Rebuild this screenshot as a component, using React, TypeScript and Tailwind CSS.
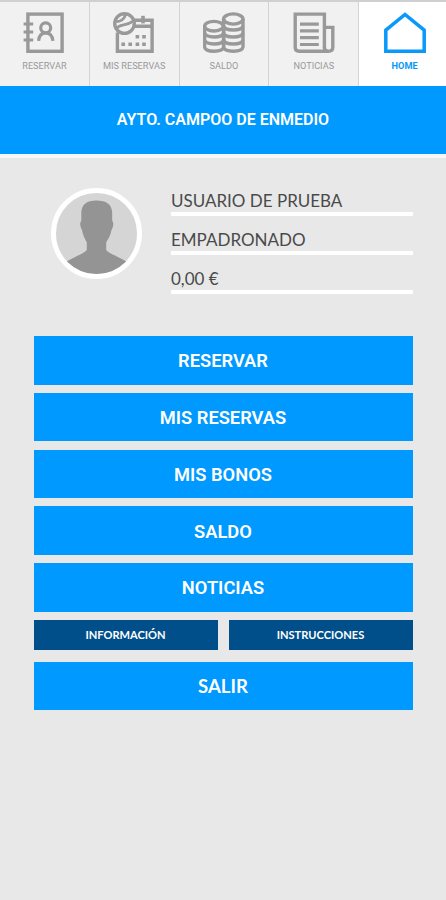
import type { ReactNode } from "react";
import clsx from "clsx";

function AgendaIcon() {
  return (
    <>
      <rect x="4.9" y="2.1" width="34.2" height="37.2" />
      <path d="M0.6 12H10.2M0.6 20H10.2M0.6 28H10.2" strokeWidth="3" />
      <circle cx="22.7" cy="15.8" r="5" strokeWidth="3.2" />
      <path d="M15.6 28.9C16 23.6 18.6 20.8 22.7 20.8S29.4 23.6 29.9 28.9" strokeWidth="3.2" />
    </>
  );
}

function CalendarIcon() {
  return (
    <>
      <circle cx="11.5" cy="11.6" r="9.8" />
      <path d="M2.2 9.6C7.4 10 11.8 7 12.6 2M3 17.8C5.6 11 12.6 14.8 20.6 8.8" strokeWidth="2.8" />
      <path d="M21 8.2H39.1V39.3H4.4V20.5M21.5 14.2H39" />
      <path d="M30 3.8V11.4" strokeWidth="3.6" />
      <path
        d="M22.6 24.8h3.6M29.2 24.8h3.6M8.4 32.2h3.6M15.4 32.2h3.6M22.6 32.2h3.6M29.2 32.2h3.6"
        strokeWidth="3.6"
      />
    </>
  );
}

function CoinsIcon() {
  return (
    <>
      <ellipse cx="30.3" cy="7" rx="9.7" ry="5.1" />
      <ellipse cx="10.9" cy="14.2" rx="9.3" ry="4.8" />
      <path d="M20.6 7V35C21.6 40.6 39 40.6 40 35V7" />
      <path d="M20.6 14C22 19.4 38.6 19.4 40 14M20.6 21C22 26.4 38.6 26.4 40 21M20.6 28C22 33.4 38.6 33.4 40 28" />
      <path d="M1.6 14V35C2.6 40.6 19.6 40.6 20.6 35V14" />
      <path d="M1.6 21C3 26.4 19.2 26.4 20.6 21M1.6 28C3 33.4 19.2 33.4 20.6 28" />
    </>
  );
}

function NewsIcon() {
  return (
    <>
      <path d="M31.4 36V2.1H2.2V35.3Q2.2 39.3 6.2 39.3H35.4Q39.8 39.3 39.8 35.3V15.4H31.4" />
      <path d="M31.4 35.4Q31.4 38 34 39.3" />
      <path d="M7 12.1H25.8M7 18.9H25.8M7 25.7H25.8M7 32.5H25.8" strokeWidth="3.2" />
    </>
  );
}

function HomeIcon() {
  return <path d="M1.8 18.2L21 2.4L40.2 18.2V39.3H1.8Z" strokeWidth="3.5" />;
}

type Tab = { label: string; icon: ReactNode; active?: boolean };

const tabs: Tab[] = [
  { label: "RESERVAR", icon: <AgendaIcon /> },
  { label: "MIS RESERVAS", icon: <CalendarIcon /> },
  { label: "SALDO", icon: <CoinsIcon /> },
  { label: "NOTICIAS", icon: <NewsIcon /> },
  { label: "HOME", icon: <HomeIcon />, active: true },
];

const userInfo = ["USUARIO DE PRUEBA", "EMPADRONADO", "0,00 €"];
const actions = ["RESERVAR", "MIS RESERVAS", "MIS BONOS", "SALDO", "NOTICIAS"];

function TabBar() {
  return (
    <nav className="overflow-hidden border-t-2 border-[#d0d0d0]">
      <div className="grid h-[84px] w-[449px] grid-cols-5">
        {tabs.map(({ label, icon, active }) => (
          <button
            key={label}
            className={clsx(
              "flex flex-col items-center pt-2.5",
              active
                ? "bg-white pl-px font-bold text-[#0a98fa]"
                : "border-r border-[#d4d4d4] bg-[#f2f1f2] text-[#999999]"
            )}
          >
            <svg
              viewBox="0 0 42 42"
              className="size-[42px] shrink-0"
              fill="none"
              stroke="currentColor"
              strokeWidth="3.4"
            >
              {icon}
            </svg>
            <span className="mt-[7px] text-[9.2px] leading-[10px] whitespace-nowrap">{label}</span>
          </button>
        ))}
      </div>
    </nav>
  );
}

function Avatar() {
  return (
    <div className="size-[91px] shrink-0 overflow-hidden rounded-full border-5 border-white bg-[#d5d5d5]">
      <svg viewBox="0 0 81 81" className="size-full" fill="#949494">
        <path d="M40.5 7.5C31 7.5 25.5 11 25.3 20V28C23.6 29 24 34 26 37C27 43 29.5 46.5 30.8 49.5V57C28 61 19 63 10 69V81H71V69C62 63 53 61 50.2 57V49.5C52 46 54.5 43 55.5 37C57.6 34 57.8 29 56.2 28V20C56 11 50 7.5 40.5 7.5Z" />
      </svg>
    </div>
  );
}

function App() {
  return (
    <div className="min-h-screen w-[446px] overflow-hidden bg-[#e8e8e8] font-[Roboto,sans-serif]">
      <TabBar />

      <header className="flex h-[72px] items-center justify-center border-b-4 border-[#f7f7f7] bg-[#0099ff] text-white">
        <h1 className="text-base font-semibold">AYTO. CAMPOO DE ENMEDIO</h1>
      </header>

      <section className="flex gap-[29px] pt-[30px] pr-[33px] pl-[51px]">
        <Avatar />
        <div className="flex-1 font-[Lato,sans-serif] text-[17px] text-[#4a4a4a]">
          {userInfo.map((text) => (
            <p key={text} className="h-[39px] border-b-4 border-white pt-3 leading-6 first:h-[28px] first:pt-px">
              {text}
            </p>
          ))}
        </div>
      </section>

      <main className="flex flex-col gap-[8.3px] px-[33.5px] pt-[42px] text-[18.3px] text-white">
        {actions.map((label) => (
          <button key={label} className="h-[48.5px] bg-[#0099ff] pt-[1.5px] font-semibold">
            {label}
          </button>
        ))}
        <div className="grid h-[30px] grid-cols-2 gap-[11px] font-[Lato,sans-serif] text-[11.1px]">
          <button className="bg-[#004f8a] pt-px font-bold">INFORMACIÓN</button>
          <button className="bg-[#004f8a] pt-px font-bold">INSTRUCCIONES</button>
        </div>
        <button className="mt-[3.5px] h-[48.5px] bg-[#0099ff] pt-px font-[Lato,sans-serif] text-[18.6px] font-bold">
          SALIR
        </button>
      </main>
    </div>
  );
}

export default App;
